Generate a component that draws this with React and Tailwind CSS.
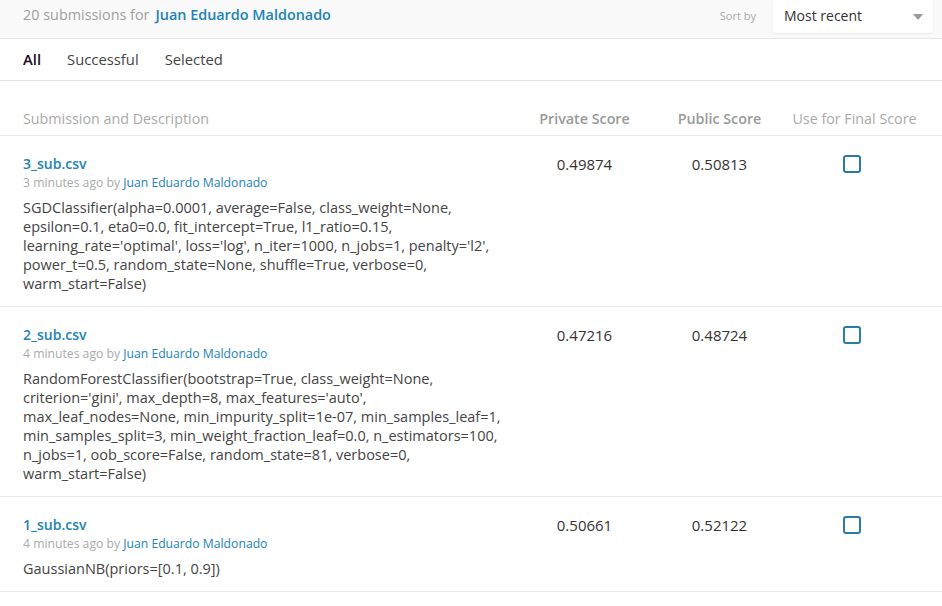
import React from "react";

const rows = [
  {
    name: "3_sub.csv",
    time: "3 minutes ago",
    desc: [
      "SGDClassifier(alpha=0.0001, average=False, class_weight=None,",
      "epsilon=0.1, eta0=0.0, fit_intercept=True, l1_ratio=0.15,",
      "learning_rate='optimal', loss='log', n_iter=1000, n_jobs=1, penalty='l2',",
      "power_t=0.5, random_state=None, shuffle=True, verbose=0,",
      "warm_start=False)",
    ],
    priv: "0.49874",
    pub: "0.50813",
  },
  {
    name: "2_sub.csv",
    time: "4 minutes ago",
    desc: [
      "RandomForestClassifier(bootstrap=True, class_weight=None,",
      "criterion='gini', max_depth=8, max_features='auto',",
      "max_leaf_nodes=None, min_impurity_split=1e-07, min_samples_leaf=1,",
      "min_samples_split=3, min_weight_fraction_leaf=0.0, n_estimators=100,",
      "n_jobs=1, oob_score=False, random_state=81, verbose=0,",
      "warm_start=False)",
    ],
    priv: "0.47216",
    pub: "0.48724",
  },
  {
    name: "1_sub.csv",
    time: "4 minutes ago",
    desc: ["GaussianNB(priors=[0.1, 0.9])"],
    priv: "0.50661",
    pub: "0.52122",
  },
];

export default function App() {
  return (
    <div
      className="w-[942px] h-[606px] bg-white overflow-hidden text-[14px]"
      style={{ fontFamily: '"Open Sans", "Liberation Sans", sans-serif' }}
    >
      {/* top bar */}
      <div className="h-[39px] bg-[#f9f9f9] border-b border-[#e6e6e6] flex items-start pl-[23px] pr-[9px]">
        <div className="mt-[5px] flex items-center gap-[6px] leading-[20px] text-[14.4px]">
          <span className="text-[#a0a0a0]">20 submissions for</span>
          <span className="text-[#2183b6] font-semibold">Juan Eduardo Maldonado</span>
        </div>
        <div className="ml-auto flex items-start">
          <span className="mt-[8px] mr-[17px] text-[11px] text-[#aaaaaa] leading-[16px]">Sort by</span>
          <div className="w-[160px] h-[33px] bg-white rounded-b-[3px] shadow-[0_1px_2px_rgba(0,0,0,0.08)] flex items-center pl-[11px] pr-[10px]">
            <span className="text-[#333] leading-[20px] -mt-[2px]">Most recent</span>
            <svg className="ml-auto" width="10" height="6" viewBox="0 0 10 6">
              <path d="M0 0 L10 0 L5 6 Z" fill="#999" />
            </svg>
          </div>
        </div>
      </div>

      {/* tabs */}
      <div className="h-[42px] border-b border-[#e3e3e3] flex items-center pl-[23px] gap-[26px] text-[14.8px] pb-[1px]">
        <span className="font-semibold text-[#1d0d22]">All</span>
        <span className="text-[#444]">Successful</span>
        <span className="text-[#444]">Selected</span>
      </div>

      {/* table header */}
      <div className="mt-[26px] h-[29px] border-b border-[#ececec] grid grid-cols-[1fr_135px_135px_135px] pl-[23px] pr-[20px] items-center pb-[4px] text-[14.3px]">
        <span className="text-[#aaaaaa]">Submission and Description</span>
        <span className="text-center text-[#999] font-semibold">Private Score</span>
        <span className="text-center text-[#999] font-semibold">Public Score</span>
        <span className="text-center text-[#aaaaaa]">Use for Final Score</span>
      </div>

      {rows.map((r) => (
        <div
          key={r.name}
          className="grid grid-cols-[1fr_135px_135px_135px] pl-[23px] pr-[20px] pt-[18px] pb-[13px] border-b border-[#ececec]"
        >
          <div>
            <div className="text-[#2183b6] font-semibold leading-[20px]">{r.name}</div>
            <div className="text-[12.2px] leading-[18px] text-[#aaaaaa]">
              {r.time} by <span className="text-[#2183b6]">Juan Eduardo Maldonado</span>
            </div>
            <div className="mt-[6px] text-[#444] leading-[19px] text-[14.5px]">
              {r.desc.map((l, i) => (
                <div key={i} className="whitespace-nowrap">{l}</div>
              ))}
            </div>
          </div>
          <div className="text-center text-[#333] leading-[20px] text-[15px]">{r.priv}</div>
          <div className="text-center text-[#333] leading-[20px] text-[15px]">{r.pub}</div>
          <div className="flex justify-center pt-[1px]">
            <div className="w-[18px] h-[18px] border-2 border-[#2a7ca8] rounded-[3px] -ml-[6px]" />
          </div>
        </div>
      ))}
    </div>
  );
}
